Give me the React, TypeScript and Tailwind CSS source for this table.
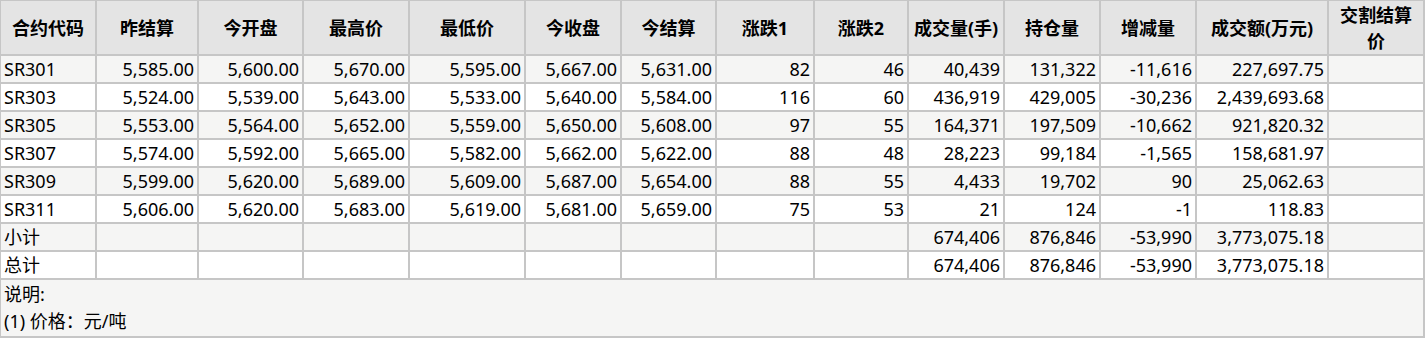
import React from "react";

const headers = [
  "合约代码",
  "昨结算",
  "今开盘",
  "最高价",
  "最低价",
  "今收盘",
  "今结算",
  "涨跌1",
  "涨跌2",
  "成交量(手)",
  "持仓量",
  "增减量",
  "成交额(万元)",
  "交割结算价",
];

const rows: string[][] = [
  ["SR301", "5,585.00", "5,600.00", "5,670.00", "5,595.00", "5,667.00", "5,631.00", "82", "46", "40,439", "131,322", "-11,616", "227,697.75", ""],
  ["SR303", "5,524.00", "5,539.00", "5,643.00", "5,533.00", "5,640.00", "5,584.00", "116", "60", "436,919", "429,005", "-30,236", "2,439,693.68", ""],
  ["SR305", "5,553.00", "5,564.00", "5,652.00", "5,559.00", "5,650.00", "5,608.00", "97", "55", "164,371", "197,509", "-10,662", "921,820.32", ""],
  ["SR307", "5,574.00", "5,592.00", "5,665.00", "5,582.00", "5,662.00", "5,622.00", "88", "48", "28,223", "99,184", "-1,565", "158,681.97", ""],
  ["SR309", "5,599.00", "5,620.00", "5,689.00", "5,609.00", "5,687.00", "5,654.00", "88", "55", "4,433", "19,702", "90", "25,062.63", ""],
  ["SR311", "5,606.00", "5,620.00", "5,683.00", "5,619.00", "5,681.00", "5,659.00", "75", "53", "21", "124", "-1", "118.83", ""],
  ["小计", "", "", "", "", "", "", "", "", "674,406", "876,846", "-53,990", "3,773,075.18", ""],
  ["总计", "", "", "", "", "", "", "", "", "674,406", "876,846", "-53,990", "3,773,075.18", ""],
];

export default function App() {
  return (
    <div
      className="w-[1425px] h-[338px] bg-white text-black text-[18px]"
      style={{ fontFamily: '"Noto Sans", "Noto Sans CJK SC", sans-serif' }}
    >
      <div className="grid grid-cols-[94px_100px_103px_104px_114px_94px_93px_96px_92px_94px_94px_94px_130px_94px] grid-rows-[53px_repeat(8,26px)_56px] gap-[2px] bg-[#c6c6c6] pl-[1px] pt-[1px] pr-[2px] pb-[2px]">
        {headers.map((h, i) => (
          <div
            key={"h" + i}
            className={
              "bg-[#e4e4e4] font-bold flex items-center justify-center text-center leading-[26px] px-[4px] " +
              (i === headers.length - 1 ? "" : "whitespace-nowrap")
            }
          >
            {h}
          </div>
        ))}
        {rows.map((r, ri) =>
          r.map((c, ci) => (
            <div
              key={ri + "-" + ci}
              className={
                (ri % 2 === 0 ? "bg-[#f5f5f4] " : "bg-white ") +
                (ci === 0
                  ? "flex items-center justify-start pl-[3px] leading-[26px] whitespace-nowrap"
                  : "flex items-center justify-end pr-[3px] leading-[26px] whitespace-nowrap")
              }
            >
              {c}
            </div>
          ))
        )}
        <div className="col-span-full bg-[#f5f5f4] pl-[3px] pt-[1px] leading-[27px]">
          <div>说明:</div>
          <div>(1) 价格：元/吨</div>
        </div>
      </div>
    </div>
  );
}
